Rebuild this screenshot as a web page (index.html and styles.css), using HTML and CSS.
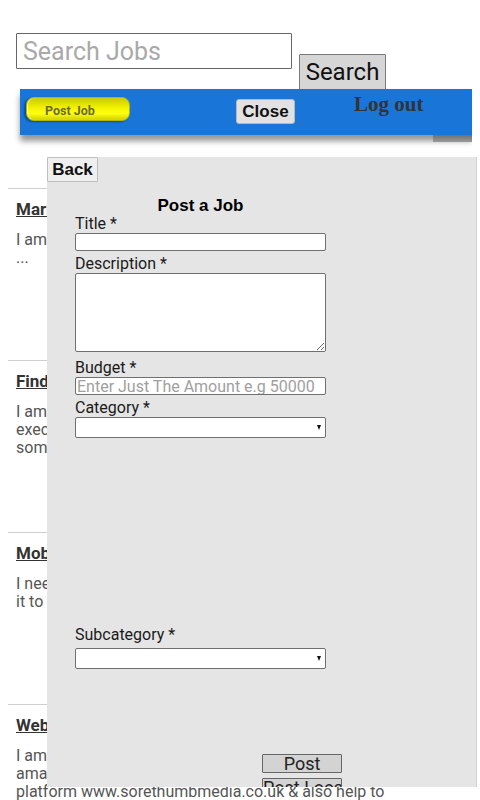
FILE: index.html
```html
<!DOCTYPE html>
<html lang="en">
<head>
<meta charset="utf-8">
<title>Jobs</title>
<link rel="stylesheet" href="styles.css">
</head>
<body>
<header class="top">
  <form class="search">
    <input class="search-input" type="text" placeholder="Search Jobs">
    <button class="search-btn" type="button">Search</button>
  </form>
  <nav class="bar">
    <button class="post-job" type="button">Post Job</button>
    <button class="close-btn" type="button">Close</button>
    <a class="logout">Log out</a>
  </nav>
</header>

<main class="jobs">
  <article class="job">
    <h3 class="job-title">Marketing Executive Needed</h3>
    <p class="job-text">I am looking for a marketing executive to promote our products<br>...</p>
  </article>
  <article class="job">
    <h3 class="job-title">Find Me A Sales Agent</h3>
    <p class="job-text">I am looking for a sales agent who can<br>execute our sales plans and bring in new clients with<br>some experience in the retail sector.</p>
  </article>
  <article class="job">
    <h3 class="job-title">Mobile App Developer</h3>
    <p class="job-text">I need a mobile app developer to build an app and publish<br>it to the app stores.</p>
  </article>
  <article class="job">
    <h3 class="job-title">Website Designer</h3>
    <p class="job-text">I am looking for a web designer who can build an<br>amazing website for our new brand and its online<br>platform www.sorethumbmedia.co.uk &amp; also help to</p>
  </article>
</main>

<section class="panel">
  <button class="back-btn" type="button">Back</button>
  <form class="post-form">
    <h2 class="form-heading">Post a Job</h2>
    <label class="field-label">Title *</label>
    <input class="field-input" type="text">
    <label class="field-label">Description *</label>
    <textarea class="field-textarea"></textarea>
    <label class="field-label">Budget *</label>
    <input class="field-input" type="text" placeholder="Enter Just The Amount e.g 50000">
    <label class="field-label">Category *</label>
    <div class="select-wrap">
      <select class="field-select"><option></option></select>
    </div>
    <div class="spacer"></div>
    <label class="field-label">Subcategory *</label>
    <div class="select-wrap sub">
      <select class="field-select"><option></option></select>
    </div>
    <div class="actions">
      <button class="action-btn" type="button">Post</button>
      <button class="action-btn" type="button">Post Local</button>
    </div>
  </form>
</section>
</body>
</html>
```

FILE: styles.css
```css
* { box-sizing: border-box; }

body {
  margin: 8px;
  font-family: Roboto, "Liberation Sans", sans-serif;
  background: #fff;
  color: #222;
}

.top { display: block; }

.search {
  display: flex;
  align-items: flex-start;
  padding: 25px 0 0 8px;
  margin: 0;
}

.search-input {
  width: 276px;
  height: 36px;
  border: 1px solid #666;
  border-radius: 1px;
  padding: 0 6px;
  font-family: Roboto, sans-serif;
  font-size: 25px;
  color: #222;
  background: #fff;
}
.search-input::placeholder { color: #a9a9a9; }

.search-btn {
  margin: 21px 0 0 7px;
  width: 87px;
  height: 36px;
  padding: 0;
  font-family: Roboto, sans-serif;
  font-size: 24px;
  color: #111;
  background: #d6d6d6;
  border: 1px solid #7a7a7a;
  border-radius: 1px;
}

.bar {
  position: relative;
  display: flex;
  align-items: flex-start;
  margin: -1px 0 0 12px;
  width: 452px;
  height: 46px;
  background: #1976d8;
  box-shadow: 0 6px 6px rgba(0, 0, 0, 0.42);
}
.bar::before {
  content: "";
  position: absolute;
  left: 452px;
  top: -6px;
  width: 8px;
  height: 47px;
  background: #1976d8;
}
.bar::after {
  content: "";
  position: absolute;
  left: 413px;
  top: 46px;
  width: 39px;
  height: 7px;
  background: linear-gradient(#6f6f6f, #9a9a9a);
}

.post-job {
  margin: 8px 0 0 6px;
  width: 104px;
  height: 24px;
  padding: 3px 0 0 18px;
  text-align: left;
  font-family: Roboto, sans-serif;
  font-weight: 700;
  font-size: 12.5px;
  line-height: 14px;
  color: #6b6b2e;
  border: 1px solid #b5b500;
  border-radius: 8px;
  background: linear-gradient(#caca00, #f2f200 45%, #ffff10 70%, #d0d000);
  box-shadow: -2px 1px 2px rgba(0, 0, 0, 0.35), inset 1px 0 1px rgba(255, 255, 255, 0.7);
}

.close-btn {
  margin: 10px 0 0 106px;
  width: 59px;
  height: 25px;
  padding: 0;
  font-family: "Liberation Sans", Arial, sans-serif;
  font-weight: 700;
  font-size: 17px;
  color: #111;
  background: #e2e2e2;
  border: 1px solid #b8b8b8;
  border-radius: 3px;
}

.logout {
  margin: 3px 0 0 59px;
  font-family: "Liberation Serif", "DejaVu Serif", serif;
  font-weight: 700;
  font-size: 21px;
  color: #333;
  text-decoration: none;
  white-space: nowrap;
}

.jobs {
  margin: 53px -8px 0 0;
}

.job {
  height: 172px;
  border-top: 1px solid #cfcfcf;
  padding: 0 8px;
}

.job-title {
  margin: 10px 0 0;
  font-family: Roboto, sans-serif;
  font-weight: 700;
  font-size: 17px;
  color: #333;
  text-decoration: underline;
  white-space: nowrap;
}

.job-text {
  margin: 12px 0 0;
  font-size: 16px;
  line-height: 18px;
  color: #555;
  white-space: nowrap;
}

.panel {
  position: absolute;
  left: 47px;
  top: 157px;
  width: 430px;
  height: 630px;
  background: #e5e5e5;
  border-right: 1px solid #d2d2d2;
  overflow: hidden;
}

.back-btn {
  display: block;
  width: 51px;
  height: 25px;
  padding: 0;
  font-family: "Liberation Sans", Arial, sans-serif;
  font-weight: 700;
  font-size: 17px;
  color: #111;
  background: #efefef;
  border: 1px solid #bdbdbd;
  border-radius: 1px;
}

.post-form {
  margin: 0 0 0 28px;
  width: 251px;
}

.form-heading {
  margin: 16px 0 0;
  height: 16px;
  font-family: "Liberation Sans", Arial, sans-serif;
  font-weight: 700;
  font-size: 17px;
  line-height: 16px;
  text-align: center;
  color: #000;
}

.field-label {
  display: block;
  font-size: 16px;
  line-height: 19px;
  color: #1a1a1a;
}

.field-input {
  display: block;
  width: 251px;
  height: 18px;
  margin: 0 0 3px;
  padding: 0 1px;
  font-family: Roboto, sans-serif;
  font-size: 16px;
  border: 1px solid #6f6f6f;
  border-radius: 2px;
  background: #fff;
}
.field-input::placeholder { color: #a0a0a0; }

.field-textarea {
  display: block;
  width: 251px;
  height: 79px;
  margin: 0 0 6px;
  padding: 1px;
  border: 1px solid #6f6f6f;
  border-radius: 2px;
  background: #fff;
  font-family: Roboto, sans-serif;
}

.select-wrap {
  position: relative;
  width: 251px;
  height: 21px;
  margin: 0 0 3px;
}
.select-wrap.sub { margin-top: 4px; }
.select-wrap::after {
  content: "";
  position: absolute;
  right: 5px;
  top: 8px;
  border-left: 2.5px solid transparent;
  border-right: 2.5px solid transparent;
  border-top: 5px solid #111;
}

.field-select {
  display: block;
  width: 251px;
  height: 21px;
  -webkit-appearance: none;
  appearance: none;
  border: 1px solid #6f6f6f;
  border-radius: 2px;
  background: #fff;
  font-family: Roboto, sans-serif;
  font-size: 14px;
}

.spacer { height: 184px; }

.actions {
  display: flex;
  flex-direction: column;
  gap: 5px;
  margin: 85px 0 0 187px;
  width: 80px;
}

.action-btn {
  width: 80px;
  height: 19px;
  padding: 0;
  font-family: Roboto, sans-serif;
  font-size: 18px;
  line-height: 17px;
  color: #222;
  background: #d3d3d3;
  border: 1px solid #666;
  border-radius: 1px;
  white-space: nowrap;
  overflow: hidden;
}
```
